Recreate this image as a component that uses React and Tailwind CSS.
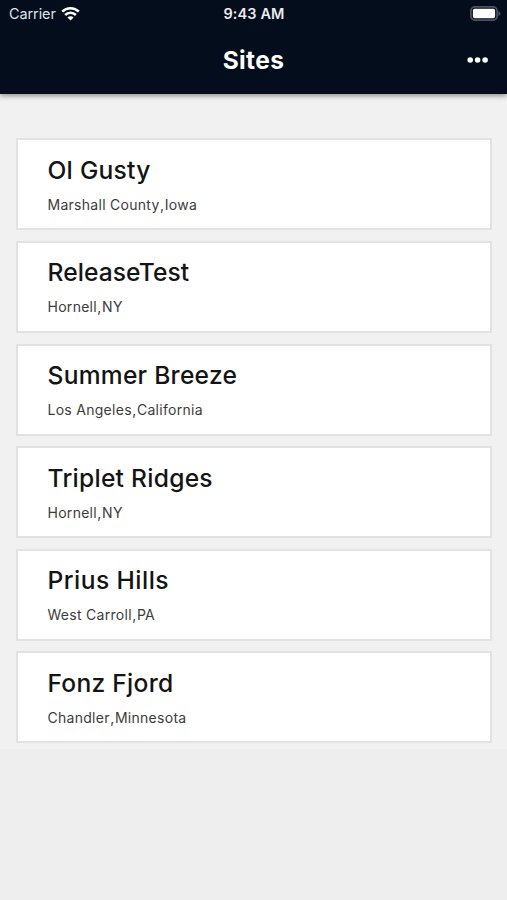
const sites = [
  { name: 'Ol Gusty', city: 'Marshall County', region: 'Iowa' },
  { name: 'ReleaseTest', city: 'Hornell', region: 'NY', tracking: 'tracking-[0.08px]' },
  { name: 'Summer Breeze', city: 'Los Angeles', region: 'California' },
  { name: 'Triplet Ridges', city: 'Hornell', region: 'NY' },
  { name: 'Prius Hills', city: 'West Carroll', region: 'PA', tracking: 'tracking-[0.45px]' },
  { name: 'Fonz Fjord', city: 'Chandler', region: 'Minnesota' },
];

function WifiIcon() {
  return (
    <svg width="19" height="15" viewBox="0 0 19 15" fill="none" stroke="#fff" strokeWidth="2.6">
      <path d="M1.2 5.6a11.8 11.8 0 0 1 16.6 0" />
      <path d="M4.1 9a7.6 7.6 0 0 1 10.8 0" />
      <path d="M9.5 14.6 6.4 11.5a4.4 4.4 0 0 1 6.2 0z" fill="#fff" stroke="none" />
    </svg>
  );
}

function BatteryIcon() {
  return (
    <svg width="31" height="15" viewBox="0 0 31 15">
      <rect x="0.9" y="0.9" width="26.2" height="13.2" rx="4" fill="none" stroke="#4b515e" strokeWidth="1.8" />
      <rect x="2.9" y="2.8" width="22.2" height="9.4" rx="1.8" fill="#fff" />
      <path d="M28.4 5v5q2.2-1 2.2-2.5t-2.2-2.5z" fill="#4b515e" />
    </svg>
  );
}

function MoreIcon() {
  return (
    <svg width="22" height="6" viewBox="0 0 22 6" fill="#fff">
      <circle cx="3.2" cy="3" r="2.8" />
      <circle cx="10.6" cy="3" r="2.8" />
      <circle cx="18.1" cy="3" r="2.8" />
    </svg>
  );
}

function Header() {
  return (
    <header className="relative h-[94px] bg-[#030d1b] text-white shadow-[0_2px_5px_rgba(0,0,0,0.4)]">
      <div className="grid h-[27px] grid-cols-3 items-center pl-[9px] pr-[6px]">
        <div className="flex items-center gap-[5px] text-[14.4px] leading-5 tracking-[-0.05px] text-[#dfe2e8]">
          <span>Carrier</span>
          <WifiIcon />
        </div>
        <div className="-ml-[2px] text-center text-[14.5px] font-semibold leading-5 tracking-[0.1px] text-[#e9ebf0]">
          9:43 AM
        </div>
        <div className="flex justify-end">
          <BatteryIcon />
        </div>
      </div>
      <div className="grid h-[65px] grid-cols-3 items-center px-[18px]">
        <span />
        <h1 className="text-center text-[24.5px] font-bold leading-8 tracking-[0.4px]">Sites</h1>
        <button className="flex justify-end" aria-label="More">
          <MoreIcon />
        </button>
      </div>
    </header>
  );
}

export default function App() {
  return (
    <div className="h-[900px] overflow-hidden bg-[#eeeeee] font-['Inter',sans-serif]">
      <Header />
      <main className="flex h-[655px] flex-col gap-[10.6px] bg-[#f1f1f1] pl-4 pr-[15px] pt-[44.4px]">
        {sites.map((s) => (
          <section key={s.name} className="h-[92px] shrink-0 border-2 border-[#e2e2e2] bg-white pl-[29.5px] pt-[13.4px]">
            <h2 className={`text-[24.6px] font-medium leading-8 text-[#141414] ${s.tracking ?? 'tracking-[0.26px]'}`}>
              {s.name}
            </h2>
            <p className="mt-[9px] flex text-[14px] leading-5 tracking-[0.28px] text-[#3c3c3c]">
              <span>{s.city}</span>
              <span className="px-[0.4px]">,</span>
              <span>{s.region}</span>
            </p>
          </section>
        ))}
      </main>
    </div>
  );
}
